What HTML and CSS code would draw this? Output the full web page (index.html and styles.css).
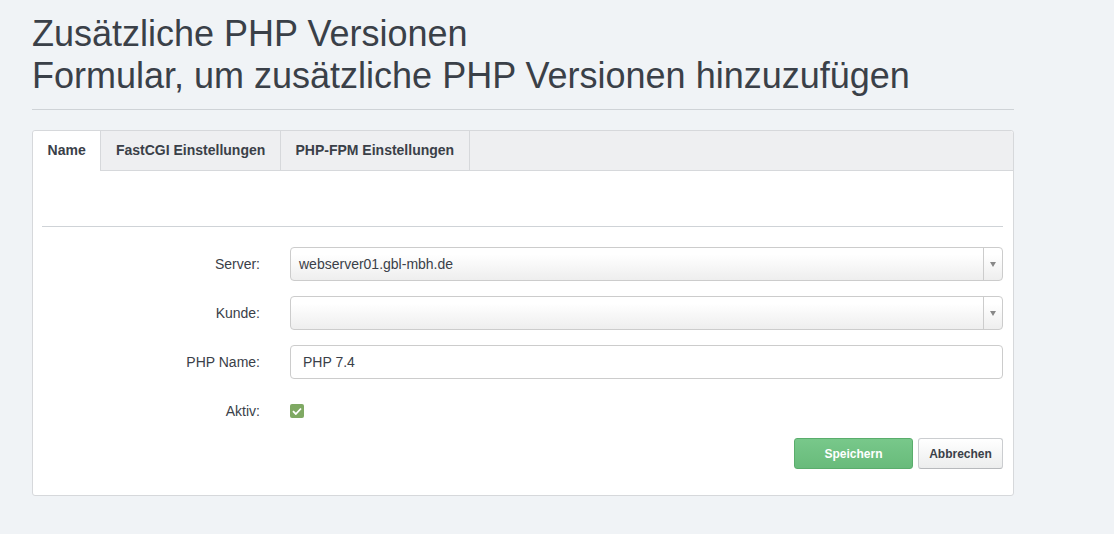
FILE: index.html
```html
<!DOCTYPE html>
<html lang="de">
<head>
    <meta charset="UTF-8">
    <title>Zusätzliche PHP Versionen</title>
    <link rel="stylesheet" href="styles.css">
</head>
<body>
    <div class="page">
        <h1 class="page-title">Zusätzliche PHP Versionen<br>Formular, um zusätzliche PHP Versionen hinzuzufügen</h1>
        <hr class="title-rule">

        <div class="panel">
            <ul class="tabs">
                <li class="tab active">Name</li>
                <li class="tab">FastCGI Einstellungen</li>
                <li class="tab">PHP-FPM Einstellungen</li>
            </ul>

            <div class="panel-body">
                <hr class="form-rule">

                <form class="form">
                    <div class="form-row">
                        <label>Server:</label>
                        <div class="select">
                            <span class="select-value">webserver01.gbl-mbh.de</span>
                            <span class="select-arrow"></span>
                        </div>
                    </div>

                    <div class="form-row">
                        <label>Kunde:</label>
                        <div class="select">
                            <span class="select-value"></span>
                            <span class="select-arrow"></span>
                        </div>
                    </div>

                    <div class="form-row">
                        <label>PHP Name:</label>
                        <div class="text-input">PHP 7.4</div>
                    </div>

                    <div class="form-row checkbox-row">
                        <label>Aktiv:</label>
                        <span class="checkbox">
                            <svg width="10" height="8" viewBox="0 0 10 8"><path d="M1 4.2 L3.8 7 L9 1.5" fill="none" stroke="#fff" stroke-width="1.8"/></svg>
                        </span>
                    </div>

                    <div class="actions">
                        <button type="button" class="btn btn-save">Speichern</button>
                        <button type="button" class="btn btn-cancel">Abbrechen</button>
                    </div>
                </form>
            </div>
        </div>
    </div>
</body>
</html>
```

FILE: styles.css
```css
body {
    margin: 0;
    background-color: #f0f3f6;
    font-family: "Liberation Sans", Arial, sans-serif;
    color: #3a4048;
}

.page {
    width: 982px;
    padding: 13px 0 38px 32px;
}

.page-title {
    margin: 0;
    font-size: 36px;
    line-height: 42px;
    font-weight: normal;
    color: #3a4048;
}

.title-rule {
    margin: 12px 0 20px 0;
    border: none;
    border-top: 1px solid #cfd3d7;
}

.panel {
    background-color: #fff;
    border: 1px solid #d6d8db;
    border-radius: 3px;
}

.tabs {
    display: flex;
    margin: 0;
    padding: 0;
    list-style: none;
    height: 39px;
    background-color: #eeeff1;
    border-bottom: 1px solid #d6d8db;
    border-radius: 3px 3px 0 0;
}

.tab {
    padding: 0 14.6px;
    line-height: 39px;
    font-size: 14px;
    font-weight: bold;
    color: #3a4048;
    border-right: 1px solid #d6d8db;
}

.tab.active {
    background-color: #fff;
    height: 40px;
    border-radius: 3px 0 0 0;
}

.panel-body {
    padding: 55px 10px 26px 9px;
}

.form-rule {
    margin: 0 0 20px 0;
    border: none;
    border-top: 1px solid #cfd3d7;
}

.form-row {
    display: grid;
    grid-template-columns: 218px 1fr;
    column-gap: 30px;
    align-items: center;
    margin-bottom: 15px;
}

.form-row label {
    text-align: right;
    font-size: 14px;
    color: #3a4048;
}

.select {
    display: flex;
    height: 32px;
    border: 1px solid #ccc;
    border-radius: 4px;
    background: linear-gradient(#ffffff 20%, #eeeeee);
}

.select-value {
    flex: 1;
    padding-left: 8px;
    line-height: 32px;
    font-size: 14px;
    color: #3a4048;
}

.select-arrow {
    width: 18px;
    border-left: 1px solid #ccc;
    position: relative;
}

.select-arrow::after {
    content: "";
    position: absolute;
    left: 6px;
    top: 14px;
    border-left: 3px solid transparent;
    border-right: 3px solid transparent;
    border-top: 5px solid #888;
}

.text-input {
    height: 32px;
    line-height: 32px;
    padding-left: 12px;
    border: 1px solid #ccc;
    border-radius: 4px;
    font-size: 14px;
    color: #3a4048;
}

.checkbox-row {
    height: 34px;
    margin-bottom: 10px;
}

.checkbox {
    width: 14px;
    height: 14px;
    border-radius: 2px;
    background-color: #7fa963;
    display: flex;
    align-items: center;
    justify-content: center;
}

.actions {
    display: flex;
    justify-content: flex-end;
    gap: 5px;
}

.btn {
    height: 31px;
    font-family: "Liberation Sans", Arial, sans-serif;
    font-size: 12px;
    font-weight: bold;
    border-radius: 3px;
    cursor: pointer;
}

.btn-save {
    width: 119px;
    color: #fff;
    background: linear-gradient(#78c88a, #68bb7b);
    border: 1px solid #5aad6c;
}

.btn-cancel {
    width: 85px;
    color: #3a4048;
    background: linear-gradient(#ffffff, #eceded);
    border: 1px solid #cbcdd0;
    border-bottom-color: #b7b9bc;
}
```
